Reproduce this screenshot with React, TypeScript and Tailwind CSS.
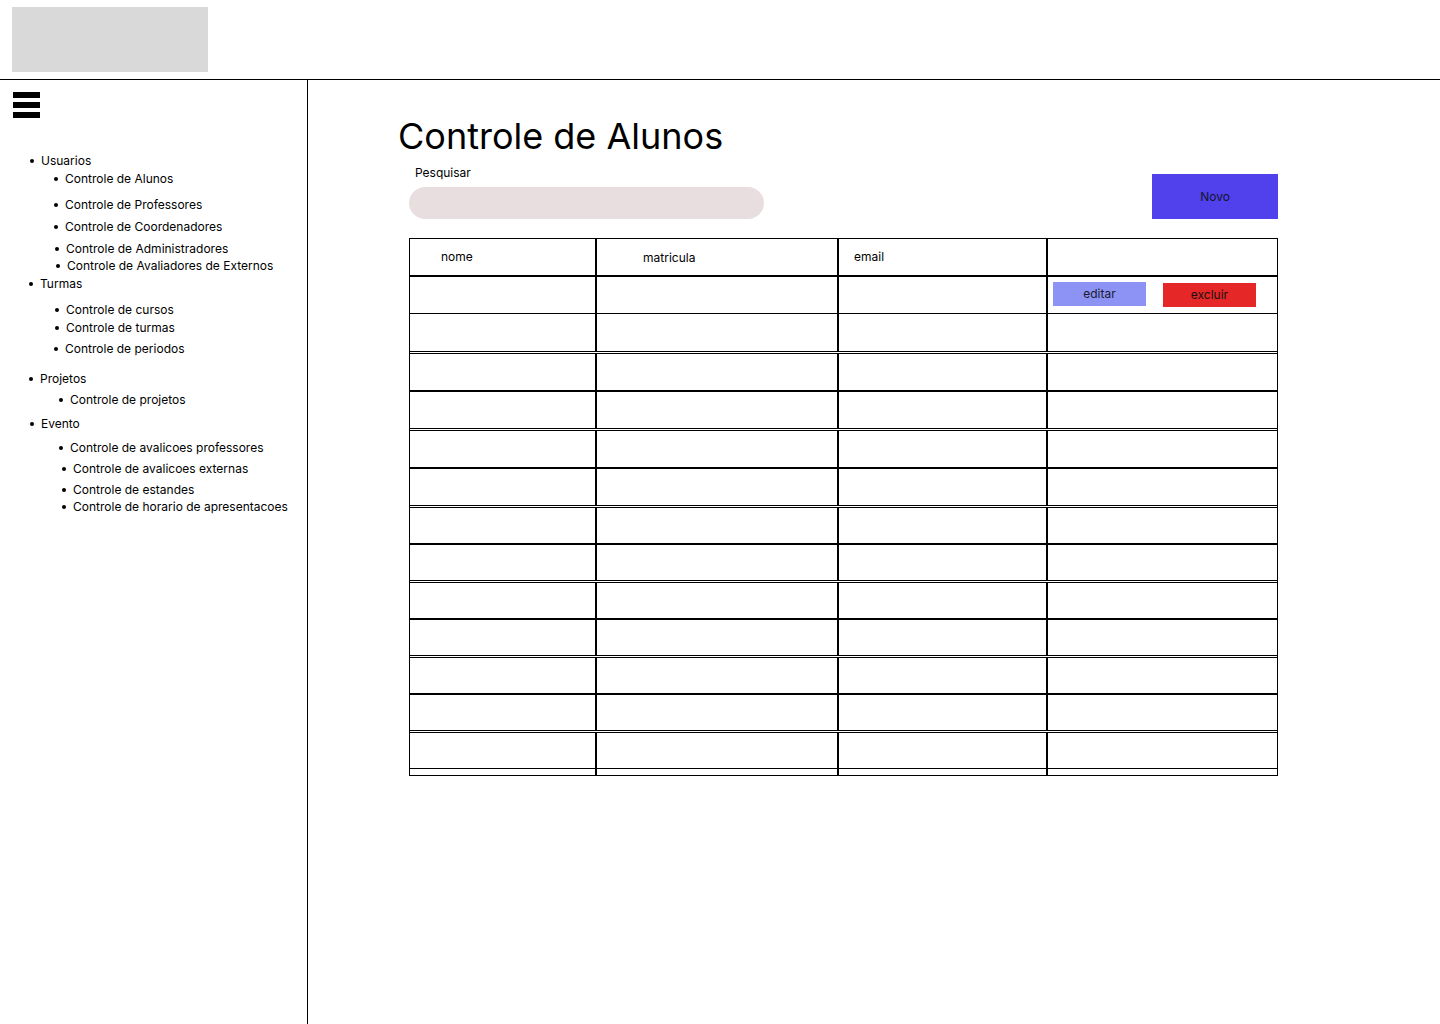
import React from "react";

type Item = { label: string; x: number; gap: number };

const items: Item[] = [
  { label: "Usuarios", x: 41, gap: 0 },
  { label: "Controle de Alunos", x: 65, gap: 3 },
  { label: "Controle de Professores", x: 65, gap: 11 },
  { label: "Controle de Coordenadores", x: 65, gap: 7 },
  { label: "Controle de Administradores", x: 66, gap: 7 },
  { label: "Controle de Avaliadores de Externos", x: 67, gap: 2 },
  { label: "Turmas", x: 40, gap: 3 },
  { label: "Controle de cursos", x: 66, gap: 11 },
  { label: "Controle de turmas", x: 66, gap: 3 },
  { label: "Controle de periodos", x: 65, gap: 6 },
  { label: "Projetos", x: 40, gap: 15 },
  { label: "Controle de projetos", x: 70, gap: 6 },
  { label: "Evento", x: 41, gap: 9 },
  { label: "Controle de avalicoes professores", x: 70, gap: 9 },
  { label: "Controle de avalicoes externas", x: 73, gap: 6 },
  { label: "Controle de estandes", x: 73, gap: 6 },
  { label: "Controle de horario de apresentacoes", x: 73, gap: 2 },
];

type RowKind = "thick" | "thin" | "double";
const rows: { kind: RowKind; h: number }[] = [
  { kind: "thick", h: 38 },
  { kind: "thin", h: 38 },
  { kind: "double", h: 39 },
  { kind: "thick", h: 38 },
  { kind: "double", h: 39 },
  { kind: "thick", h: 38 },
  { kind: "double", h: 38 },
  { kind: "thick", h: 37 },
  { kind: "double", h: 38 },
  { kind: "thick", h: 37 },
  { kind: "double", h: 38 },
  { kind: "thick", h: 37 },
  { kind: "double", h: 38 },
  { kind: "thin", h: 7 },
];

const borderClass: Record<RowKind, string> = {
  thick: "border-t-2 border-black",
  thin: "border-t border-black",
  double: "border-t-[3px] border-double border-black",
};

function Cells({ first }: { first?: boolean }) {
  return (
    <div className="grid h-full grid-cols-[185px_242px_209px_1fr]">
      <div />
      <div className="border-l-2 border-black" />
      <div className="border-l-2 border-black" />
      <div className="border-l-2 border-black">
        {first && (
          <div className="flex items-start pl-[5px]">
            <button className="mt-[5px] flex h-[24px] w-[93px] items-center justify-center bg-[#8c93f5] text-[12px] text-[#1a1a2e]">
              editar
            </button>
            <button className="ml-[17px] mt-[6px] flex h-[24px] w-[93px] items-center justify-center bg-[#e52727] text-[12px] text-[#1a1010]">
              excluir
            </button>
          </div>
        )}
      </div>
    </div>
  );
}

export default function App() {
  return (
    <div
      className="min-h-[1024px] w-[1440px] bg-white text-black"
      style={{ fontFamily: "Inter, 'Noto Sans', sans-serif" }}
    >
      <header className="h-[80px] border-b border-black pl-[12px] pt-[7px]">
        <div className="h-[65px] w-[196px] bg-[#d9d9d9]" />
      </header>
      <div className="flex h-[944px]">
        <aside className="w-[308px] shrink-0 border-r border-black">
          <div className="ml-[13px] mt-[12px] flex w-[27px] flex-col gap-[4px]">
            <div className="h-[6px] bg-black" />
            <div className="h-[6px] bg-black" />
            <div className="h-[6px] bg-black" />
          </div>
          <ul className="mt-[35px] flex flex-col">
            {items.map((it, i) => (
              <li
                key={i}
                className="flex h-[15px] items-center text-[12px] leading-[15px]"
                style={{ paddingLeft: it.x - 11, marginTop: it.gap }}
              >
                <span className="mr-[7px] h-[4px] w-[4px] rounded-full bg-black" />
                {it.label}
              </li>
            ))}
          </ul>
        </aside>
        <main className="flex-1">
          <h1 className="ml-[90px] mt-[32px] h-[48px] text-[36px] leading-[48px] font-normal">
            Controle de Alunos
          </h1>
          <div className="ml-[101px] flex w-[869px] items-start justify-between">
            <div className="flex flex-col">
              <label className="ml-[6px] mt-[5px] h-[15px] text-[12px] leading-[15px]">
                Pesquisar
              </label>
              <div className="mt-[7px] h-[32px] w-[355px] rounded-full bg-[#e9dedf]" />
            </div>
            <button className="mt-[14px] flex h-[45px] w-[126px] items-center justify-center bg-[#5141ed] text-[12px] text-[#14142b]">
              Novo
            </button>
          </div>
          <div className="ml-[101px] mt-[19px] w-[869px] border border-black">
            <div className="grid h-[36px] grid-cols-[185px_242px_209px_1fr] text-[12px]">
              <div className="flex items-center pl-[31px]">nome</div>
              <div className="flex items-center border-l-2 border-black pl-[46px] pt-[2px]">
                matricula
              </div>
              <div className="flex items-center border-l-2 border-black pl-[15px]">
                email
              </div>
              <div className="border-l-2 border-black" />
            </div>
            {rows.map((r, i) => (
              <div
                key={i}
                className={borderClass[r.kind]}
                style={{ height: r.h }}
              >
                <Cells first={i === 0} />
              </div>
            ))}
          </div>
        </main>
      </div>
    </div>
  );
}
